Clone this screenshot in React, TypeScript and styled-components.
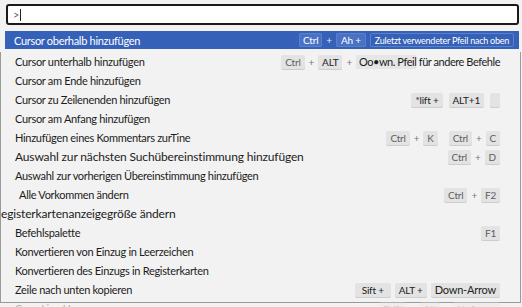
import React from "react";
import styled, { createGlobalStyle } from "styled-components";

const Global = createGlobalStyle`
  html, body { margin: 0; padding: 0; background: #f2f2f2; }
  body { font-family: Lato, "Liberation Sans", sans-serif; width: 522px; height: 307px; overflow: hidden; }
`;

const Page = styled.div`
  width: 522px;
  height: 307px;
  display: flex;
  flex-direction: column;
  background: #f2f2f2;
`;

const Top = styled.div`
  display: flex;
  flex-direction: column;
  padding: 4px 3px 0 5px;
  gap: 6px;
`;

const InputBox = styled.div`
  height: 21px;
  margin-left: 1px;
  box-sizing: border-box;
  border: 2px solid #1a1a1a;
  border-radius: 3px;
  background: #fff;
  display: flex;
  align-items: center;
  padding-left: 5px;
  font-size: 11px;
  color: #666;
`;

const Caret = styled.span`
  display: inline-block;
  width: 1px;
  height: 12px;
  background: #222;
  margin-left: 1px;
`;

const Row = styled.div<{ $selected?: boolean; $indent?: number; $size?: number; $faded?: boolean }>`
  flex-shrink: 0;
  height: 19px;
  display: flex;
  align-items: center;
  justify-content: space-between;
  padding-left: ${(p) => p.$indent ?? 14}px;
  padding-right: ${(p) => (p.$selected ? 5 : 20)}px;
  box-sizing: border-box;
  font-size: ${(p) => p.$size ?? 11}px;
  letter-spacing: ${(p) => (p.$size && p.$size > 11 ? "-0.15px" : "-0.3px")};
  color: ${(p) => (p.$selected ? "#fff" : "#1c1c1c")};
  background: ${(p) => (p.$selected ? "#3661b8" : "transparent")};
  opacity: ${(p) => (p.$faded ? 0.3 : 1)};
  white-space: nowrap;
`;

const SelectedRow = styled(Row)`
  height: 18px;
  padding-left: 9px;
`;

const List = styled.div`
  margin-top: 3px;
  height: 251px;
  border-left: 1px solid #9a9a9a;
  border-right: 1px solid #9a9a9a;
  border-bottom: 1px solid #9a9a9a;
  width: 521px;
  box-sizing: border-box;
  display: flex;
  flex-direction: column;
`;

const Keys = styled.div<{ $gap?: number }>`
  display: flex;
  align-items: center;
  gap: ${(p) => p.$gap ?? 4}px;
`;

const Key = styled.span<{ $dark?: boolean; $onBlue?: boolean; $w?: number; $big?: boolean }>`
  height: 14px;
  min-width: ${(p) => p.$w ?? 0}px;
  box-sizing: border-box;
  padding: 0 4px;
  display: inline-flex;
  align-items: center;
  justify-content: center;
  border-radius: 2px;
  font-size: ${(p) => (p.$big ? 11 : 10)}px;
  letter-spacing: -0.2px;
  color: ${(p) => (p.$onBlue ? "#fff" : p.$dark ? "#222" : "#5e5e5e")};
  background: ${(p) => (p.$onBlue ? "#4a72c4" : "#e3e3e3")};
  box-shadow: ${(p) => (p.$onBlue ? "inset 0 0 0 1px #5a80cc" : "0 1px 0 #cdcdcd")};
`;

const Plus = styled.span<{ $onBlue?: boolean }>`
  font-size: 10px;
  color: ${(p) => (p.$onBlue ? "#e6ecf8" : "#777")};
`;

const Tip = styled.span`
  height: 14px;
  display: inline-flex;
  align-items: center;
  padding: 0 4px;
  font-size: 9px;
  letter-spacing: -0.25px;
  color: #fff;
  border: 1px solid #5a80cc;
  border-radius: 2px;
  box-sizing: border-box;
`;

const LongText = styled.span`
  font-size: 11px;
  color: #1c1c1c;
  letter-spacing: -0.45px;
  background: linear-gradient(to right, #e6e6e6 0, #e6e6e6 60px, transparent 60px);
  padding-left: 3px;
  height: 14px;
  display: inline-flex;
  align-items: center;
`;

type K = { k: string; dark?: boolean } | "+";

const Combo: React.FC<{ keys: K[] }> = ({ keys }) => (
  <Keys>
    {keys.map((x, i) =>
      x === "+" ? <Plus key={i}>+</Plus> : <Key key={i} $dark={x.dark}>{x.k}</Key>
    )}
  </Keys>
);

export default function App() {
  return (
    <Page>
      <Global />
      <Top>
        <InputBox>
          &gt;<Caret />
        </InputBox>
        <SelectedRow $selected>
          <span>Cursor oberhalb hinzufügen</span>
          <Keys>
            <Key $onBlue>Ctrl</Key>
            <Plus $onBlue>+</Plus>
            <Key $onBlue $w={30}>Ah +</Key>
            <Tip>Zuletzt verwendeter Pfeil nach oben</Tip>
          </Keys>
        </SelectedRow>
      </Top>
      <List>
        <Row>
          <span>Cursor unterhalb hinzufügen</span>
          <Keys>
            <Key>Ctrl</Key>
            <Plus>+</Plus>
            <Key $dark>ALT</Key>
            <Plus>+</Plus>
            <LongText>Oo•wn. Pfeil für andere Befehle</LongText>
          </Keys>
        </Row>
        <Row>
          <span>Cursor am Ende hinzufügen</span>
        </Row>
        <Row>
          <span>Cursor zu Zeilenenden hinzufügen</span>
          <Keys $gap={6}>
            <Key $dark $w={28}>*lift +</Key>
            <Key $dark $w={32}>ALT+1</Key>
            <Key $w={10}></Key>
          </Keys>
        </Row>
        <Row>
          <span>Cursor am Anfang hinzufügen</span>
        </Row>
        <Row>
          <span>Hinzufügen eines Kommentars zurTine</span>
          <Keys $gap={11}>
            <Combo keys={[{ k: "Ctrl" }, "+", { k: "K" }]} />
            <Combo keys={[{ k: "Ctrl" }, "+", { k: "C" }]} />
          </Keys>
        </Row>
        <Row $size={12}>
          <span>Auswahl zur nächsten Suchübereinstimmung hinzufügen</span>
          <Combo keys={[{ k: "Ctrl" }, "+", { k: "D" }]} />
        </Row>
        <Row>
          <span>Auswahl zur vorherigen Übereinstimmung hinzufügen</span>
        </Row>
        <Row $indent={18}>
          <span>Alle Vorkommen ändern</span>
          <Combo keys={[{ k: "Ctrl" }, "+", { k: "F2" }]} />
        </Row>
        <Row $indent={0} $size={12}>
          <span>egisterkartenanzeigegröße ändern</span>
        </Row>
        <Row>
          <span>Befehlspalette</span>
          <Combo keys={[{ k: "F1" }]} />
        </Row>
        <Row>
          <span>Konvertieren von Einzug in Leerzeichen</span>
        </Row>
        <Row>
          <span>Konvertieren des Einzugs in Registerkarten</span>
        </Row>
        <Row>
          <span>Zeile nach unten kopieren</span>
          <Keys $gap={4}>
            <Key $dark $w={36}>Sift +</Key>
            <Key $dark $w={29}>ALT +</Key>
            <Key $dark $big $w={59}>Down-Arrow</Key>
          </Keys>
        </Row>
        <Row $faded>
          <span>Copy Line Up</span>
          <Combo keys={[{ k: "Shift" }, "+", { k: "Alt" }, "+", { k: "UpArrow" }]} />
        </Row>
      </List>
    </Page>
  );
}
